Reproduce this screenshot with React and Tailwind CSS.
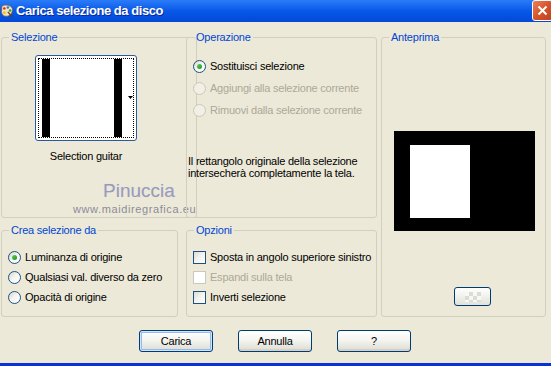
import React from "react";

function Radio({ checked, disabled }) {
  return (
    <span
      className={`flex h-[13px] w-[13px] shrink-0 items-center justify-center rounded-full border ${
        disabled
          ? "border-[#cac8bb] bg-[#f2f0e6]"
          : "border-[#1c5180] bg-gradient-to-br from-[#d8d8d0] via-[#f6f6f3] to-white"
      }`}
    >
      {checked && (
        <span className="h-[5px] w-[5px] rounded-full bg-gradient-to-br from-[#5ed05a] to-[#169316]" />
      )}
    </span>
  );
}

function Check({ disabled }) {
  return (
    <span
      className={`h-[13px] w-[13px] shrink-0 border ${
        disabled
          ? "border-[#cac8bb] bg-white"
          : "border-[#1c5180] bg-gradient-to-br from-[#dcdcd5] via-[#f3f3f0] to-white"
      }`}
    />
  );
}

function Option({ children, disabled, control }) {
  return (
    <label className={`flex h-[13px] items-center gap-[4px] leading-[13px] ${disabled ? "text-[#aca899]" : "text-black"}`}>
      {control}
      <span className="whitespace-nowrap">{children}</span>
    </label>
  );
}

function Group({ title, className, children }) {
  return (
    <fieldset className={`rounded-[3px] border border-[#d0d0bf] ${className}`}>
      <legend className="ml-[7px] px-[2px] text-[11px] leading-[13px] text-[#0046d5]">{title}</legend>
      {children}
    </fieldset>
  );
}

function XpButton({ children, def }) {
  return (
    <button
      className={`h-[22px] w-[74px] rounded-[3px] border border-[#003c74] bg-gradient-to-b from-white via-[#f3f3ef] to-[#dcdcd2] text-[11px] text-black ${
        def ? "shadow-[inset_0_0_0_1px_#cee7ff,inset_0_0_0_2px_#98b8ea]" : "shadow-[inset_0_-2px_0_#d6d0c5]"
      }`}
    >
      {children}
    </button>
  );
}

function AppIcon() {
  return (
    <svg width="16" height="16" viewBox="0 0 16 16">
      <path d="M2 3 C5 0 12 1 14 5 C15 9 12 14 7 14 C3 14 1 10 2 7 Z" fill="#f2e3c2" stroke="#7a5a2a" strokeWidth="0.8" />
      <circle cx="5" cy="5" r="1.4" fill="#d42020" />
      <circle cx="9" cy="4" r="1.4" fill="#2a7bd8" />
      <circle cx="11.5" cy="7.5" r="1.4" fill="#2da030" />
      <circle cx="5" cy="10" r="1.6" fill="#f0c020" />
      <path d="M9 9 L14 15" stroke="#6b3f16" strokeWidth="1.6" />
    </svg>
  );
}

export default function App() {
  return (
    <div className="flex h-[366px] w-[551px] flex-col overflow-hidden bg-[#ece9d8] font-['Liberation_Sans',Arial,sans-serif] text-[11px] tracking-[-0.22px] text-black">
      {/* title bar */}
      <div className="flex h-[22px] shrink-0 items-center bg-gradient-to-b from-[#2a7cf8] via-[#0858e8] to-[#0448d6]">
        <div className="mr-[2px] flex h-[16px] w-[14px] items-center overflow-hidden">
          <AppIcon />
        </div>
        <span className="text-[13px] font-bold tracking-[-0.45px] text-white [text-shadow:1px_1px_0_#0a2a9a]">
          Carica selezione da disco
        </span>
        <div className="ml-auto mr-[-2px] flex h-[21px] w-[21px] items-center justify-center self-start rounded-[3px] border border-white bg-gradient-to-br from-[#e8805a] via-[#d8542a] to-[#c0401a]">
          <svg width="11" height="11" viewBox="0 0 11 11">
            <path d="M1.5 1.5 L9.5 9.5 M9.5 1.5 L1.5 9.5" stroke="white" strokeWidth="2" />
          </svg>
        </div>
      </div>

      {/* groups */}
      <div className="mt-[9px] grid grid-cols-[177px_8px_191px_4px_165px] grid-rows-[187px_93px] gap-y-[6px] pl-[1px]">
        <Group title="Selezione" className="col-start-1 row-start-1">
          <div className="ml-[33px] mt-[11px] flex w-[102px] flex-col items-center">
            <div className="relative h-[86px] w-[102px] rounded-[3px] border border-[#2a5a9a] bg-white p-[2px]">
              <div className="flex h-full border border-dotted border-black pl-[3px]">
                <div className="w-[8px] bg-black" />
                <div className="w-[64px] bg-white" />
                <div className="w-[8px] bg-black" />
              </div>
              <svg className="absolute right-[3px] top-[40px]" width="5" height="3" viewBox="0 0 5 3">
                <path d="M0 0 H5 L2.5 3 Z" fill="black" />
              </svg>
            </div>
            <div className="mt-[9px] whitespace-nowrap leading-[13px]">Selection guitar</div>
          </div>
          <div className="ml-[101px] mt-[19px] whitespace-nowrap text-[19px] leading-[18px] tracking-[0px] text-[#9a9ab8] [text-shadow:0_0_1px_#d8d8e6]">
            Pinuccia
          </div>
          <div className="ml-[71px] mt-[3px] whitespace-nowrap text-[11px] leading-[12px] tracking-[0.6px] text-[#8c8c98]">
            www.maidiregrafica.eu
          </div>
        </Group>

        <Group title="Operazione" className="col-start-3 row-start-1">
          <div className="ml-[6px] mt-[16px] flex flex-col gap-[9px]">
            <Option control={<Radio checked />}>Sostituisci selezione</Option>
            <Option disabled control={<Radio disabled />}>Aggiungi alla selezione corrente</Option>
            <Option disabled control={<Radio disabled />}>Rimuovi dalla selezione corrente</Option>
          </div>
          <div className="ml-[1px] mt-[38px] leading-[12px]">
            Il rettangolo originale della selezione
            <br />
            intersecherà completamente la tela.
          </div>
        </Group>

        <Group title="Crea selezione da" className="col-start-1 row-start-2">
          <div className="ml-[6px] mt-[14px] flex flex-col gap-[7px]">
            <Option control={<Radio checked />}>Luminanza di origine</Option>
            <Option control={<Radio />}>Qualsiasi val. diverso da zero</Option>
            <Option control={<Radio />}>Opacità di origine</Option>
          </div>
        </Group>

        <Group title="Opzioni" className="col-start-3 row-start-2">
          <div className="ml-[6px] mt-[14px] flex flex-col gap-[7px]">
            <Option control={<Check />}>Sposta in angolo superiore sinistro</Option>
            <Option disabled control={<Check disabled />}>Espandi sulla tela</Option>
            <Option control={<Check />}>Inverti selezione</Option>
          </div>
        </Group>

        <Group title="Anteprima" className="col-start-5 row-span-2 row-start-1">
          <div className="ml-[12px] mt-[87px] h-[100px] w-[141px] bg-black pl-[16px] pt-[14px]">
            <div className="h-[73px] w-[60px] bg-white" />
          </div>
          <div className="ml-[72px] mt-[56px] flex h-[19px] w-[37px] items-center justify-center rounded-[3px] border border-[#003c74] bg-gradient-to-b from-white to-[#e2e2da]">
            <svg width="16" height="10" viewBox="0 0 16 10">
              <rect x="0" y="0" width="16" height="10" fill="#f7f7f4" />
              <rect x="4" y="0" width="4" height="4" fill="#dcdcd6" />
              <rect x="12" y="0" width="4" height="4" fill="#dcdcd6" />
              <rect x="0" y="4" width="4" height="4" fill="#dcdcd6" />
              <rect x="8" y="4" width="4" height="4" fill="#dcdcd6" />
              <rect x="4" y="8" width="4" height="2" fill="#dcdcd6" />
              <rect x="12" y="8" width="4" height="2" fill="#dcdcd6" />
            </svg>
          </div>
        </Group>
      </div>

      {/* buttons */}
      <div className="mt-[13px] flex gap-[25px] pl-[139px]">
        <XpButton def>Carica</XpButton>
        <XpButton>Annulla</XpButton>
        <XpButton>?</XpButton>
      </div>

      <div className="mt-auto h-[3px] shrink-0 bg-[#0831d9]" />
    </div>
  );
}
